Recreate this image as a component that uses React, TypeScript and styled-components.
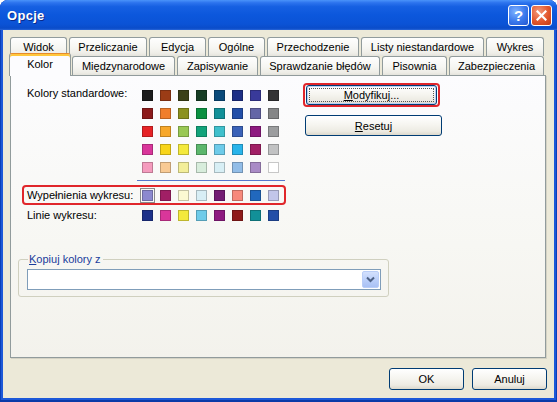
import React from "react";
import styled, { createGlobalStyle } from "styled-components";

const GlobalStyle = createGlobalStyle`
  html, body { margin: 0; padding: 0; background: #ffffff; }
  body {
    font-family: "Liberation Sans", Arial, sans-serif;
    font-size: 11px;
    color: #000;
  }
  * { box-sizing: border-box; }
`;

const STANDARD = [
  ["#1c1c1c", "#9b3c16", "#3b4018", "#163d24", "#0a4a7a", "#1d2f85", "#393a9a", "#333335"],
  ["#8c1b1b", "#f07e2c", "#8c911f", "#0a9040", "#129098", "#234fa8", "#6465a6", "#858687"],
  ["#e62326", "#f7a729", "#99c854", "#12a37a", "#40c0cc", "#3a62b8", "#8e1a80", "#9c9d9f"],
  ["#d9369a", "#f8d51a", "#f4e93c", "#5cb76c", "#6ecbe9", "#29b4ea", "#a11f65", "#c1c2c3"],
  ["#f49bbd", "#f8ca94", "#f3ee99", "#d8eddc", "#d8eff5", "#92bde7", "#a98bc6", "#ffffff"],
];
const FILLS = ["#8c89cf", "#a11f65", "#fbf9d2", "#d8eef5", "#731c73", "#f7897b", "#2168bd", "#c2c6ea"];
const LINES = ["#1d3189", "#d9369a", "#f4e93c", "#6ecbe9", "#8e1a80", "#8e1a1a", "#129098", "#234fa8"];

const BACK_TABS = [
  { label: "Widok", w: 57 },
  { label: "Przeliczanie", w: 78 },
  { label: "Edycja", w: 57 },
  { label: "Ogólne", w: 57 },
  { label: "Przechodzenie", w: 92 },
  { label: "Listy niestandardowe", w: 123 },
  { label: "Wykres", w: 58 },
];
const FRONT_TABS = [
  { label: "Kolor", w: 62, active: true },
  { label: "Międzynarodowe", w: 103 },
  { label: "Zapisywanie", w: 81 },
  { label: "Sprawdzanie błędów", w: 120 },
  { label: "Pisownia", w: 65 },
  { label: "Zabezpieczenia", w: 95 },
];

const Window = styled.div`
  width: 557px;
  height: 402px;
  display: flex;
  flex-direction: column;
  background: #1c58d8;
  border-radius: 8px 8px 0 0;
  overflow: hidden;
  box-shadow: inset 0 -2px 0 #0a3aa8, inset 1px 0 0 #0a3fb8, inset -1px 0 0 #0a3fb8;
`;

const TitleBar = styled.div`
  height: 30px;
  flex: 0 0 30px;
  display: flex;
  align-items: center;
  gap: 2px;
  padding: 0 5px 0 7px;
  background: linear-gradient(180deg, #4a93fa 0%, #2d74ee 9%, #1660e2 22%, #0c57dc 50%, #0b53d6 80%, #0a4cc9 94%, #2a66d8 100%);
`;

const Title = styled.div`
  flex: 1;
  color: #fff;
  font-weight: bold;
  font-size: 13px;
  letter-spacing: 0.3px;
  text-shadow: 1px 1px 0 #0a2a8a;
`;

const CaptionButton = styled.div<{ $close?: boolean }>`
  width: 21px;
  height: 21px;
  border: 1px solid #fff;
  border-radius: 3px;
  display: flex;
  align-items: center;
  justify-content: center;
  color: #fff;
  font-weight: bold;
  font-size: 15px;
  background: ${(p) =>
    p.$close
      ? "radial-gradient(circle at 35% 30%, #f39a7c 0%, #e2572d 55%, #c23b14 100%)"
      : "radial-gradient(circle at 35% 30%, #7fb2ff 0%, #3a78ec 55%, #2456d0 100%)"};
`;

const Body = styled.div`
  flex: 1;
  margin: 0 3px 4px 3px;
  background: #ece9d8;
  padding: 7px 8px 8px 7px;
  display: flex;
  flex-direction: column;
`;

const TabRow = styled.div`
  height: 19px;
  display: flex;
  align-items: flex-start;
  gap: 2px;
`;

const Tab = styled.div<{ $w: number; $active?: boolean }>`
  width: ${(p) => p.$w}px;
  height: ${(p) => (p.$active ? 23 : 19)}px;
  margin: ${(p) => (p.$active ? "-3px -1px 0 -1px" : "0")};
  position: relative;
  z-index: ${(p) => (p.$active ? 2 : 1)};
  display: flex;
  align-items: center;
  justify-content: center;
  padding-bottom: ${(p) => (p.$active ? 2 : 0)}px;
  white-space: nowrap;
  border: 1px solid #919b9c;
  border-bottom: none;
  border-top-color: ${(p) => (p.$active ? "#e68b2c" : "#919b9c")};
  border-radius: 3px 3px 0 0;
  background: ${(p) =>
    p.$active
      ? "#fcfcfe"
      : "linear-gradient(180deg, #fefefe 0%, #f6f6f2 55%, #eeede7 85%, #e4e3dc 100%)"};
  box-shadow: ${(p) => (p.$active ? "inset 0 2px 0 #ffc73c" : "none")};
`;

const Panel = styled.div`
  height: 283px;
  flex: 0 0 283px;
  border: 1px solid #919b9c;
  background: linear-gradient(180deg, #fcfcfe 0%, #f7f7f3 60%, #f3f2ec 100%);
  box-shadow: 1px 1px 0 #d4d2c4;
  padding: 7px 0 0 7px;
  display: flex;
  flex-direction: column;
`;

const TopSection = styled.div`
  display: flex;
  align-items: flex-start;
`;

const ColorArea = styled.div`
  margin-left: 9px;
  padding-top: 7px;
  width: 260px;
  display: flex;
  flex-direction: column;
`;

const Row = styled.div`
  display: flex;
  align-items: center;
`;

const StdRow = styled.div`
  display: flex;
  align-items: flex-start;
`;

const Label = styled.div<{ $shift?: number }>`
  width: 115px;
  flex: 0 0 115px;
  line-height: 13px;
  white-space: nowrap;
  margin-top: ${(p) => p.$shift || 0}px;
`;

const SwatchGrid = styled.div`
  display: grid;
  grid-template-columns: repeat(8, 11px);
  grid-auto-rows: 11px;
  column-gap: 7px;
  row-gap: 7px;
`;

const Swatch = styled.div<{ $color: string; $selected?: boolean }>`
  width: 11px;
  height: 11px;
  background: ${(p) => p.$color};
  border: 1px solid rgba(0, 0, 0, 0.22);
  outline: ${(p) => (p.$selected ? "1px solid #8a8a8a" : "none")};
  outline-offset: 1px;
`;

const Separator = styled.div`
  margin: 7px 0 0 110px;
  width: 148px;
  height: 1px;
  background: #5677cc;
`;

const Highlight = styled.div<{ $pad: string }>`
  border: 2px solid #e0262b;
  border-radius: 4px;
  padding: ${(p) => p.$pad};
`;

const FillRow = styled(Highlight)`
  margin: 4px 0 0 -5px;
  display: flex;
  align-items: center;
  width: 264px;
`;

const LineRow = styled(Row)`
  margin-top: 4px;
`;

const ButtonColumn = styled.div`
  margin-left: 16px;
  display: flex;
  flex-direction: column;
  align-items: flex-start;
`;

const XPButton = styled.button<{ $w: number; $h: number; $focus?: boolean }>`
  width: ${(p) => p.$w}px;
  height: ${(p) => p.$h}px;
  padding: 0;
  font-family: inherit;
  font-size: 11px;
  color: #000;
  border: 1px solid #003c74;
  border-radius: 3px;
  background: linear-gradient(180deg, #ffffff 0%, #f6f5f0 45%, #edebe3 80%, #dcd8cc 100%);
  box-shadow: ${(p) => (p.$focus ? "inset 0 0 0 1px #b9d0f5" : "none")};
  outline: ${(p) => (p.$focus ? "1px dotted #555" : "none")};
  outline-offset: -4px;
  u { text-decoration: underline; }
`;

const ResetButton = styled(XPButton)`
  margin: 8px 0 0 2px;
`;

const GroupBox = styled.fieldset`
  margin: 31px 0 0 0;
  width: 370px;
  border: 1px solid #d0d0bf;
  border-radius: 3px;
  padding: 3px 7px 6px 8px;
`;

const GroupLegend = styled.legend`
  padding: 0 2px 0 1px;
  margin-left: 1px;
  color: #1a3d9c;
  line-height: 13px;
`;

const Combo = styled.div`
  width: 354px;
  height: 21px;
  border: 1px solid #7f9db9;
  background: #fff;
  display: flex;
  justify-content: flex-end;
  align-items: center;
  padding-right: 1px;
`;

const DropButton = styled.div`
  width: 17px;
  height: 17px;
  border: 1px solid #b9cdf7;
  border-radius: 2px;
  background: linear-gradient(180deg, #d3e0fd 0%, #bcd0fa 50%, #a9c1f4 100%);
  display: flex;
  align-items: center;
  justify-content: center;
`;

const BottomBar = styled.div`
  margin-top: 10px;
  display: flex;
  justify-content: flex-end;
  gap: 8px;
  margin-right: -1px;
`;

const Chevron = () => (
  <svg width="9" height="7" viewBox="0 0 9 7">
    <path d="M1 1.5 L4.5 5 L8 1.5" fill="none" stroke="#4d6185" strokeWidth="2" />
  </svg>
);

const CloseGlyph = () => (
  <svg width="11" height="11" viewBox="0 0 11 11">
    <path d="M1.5 1.5 L9.5 9.5 M9.5 1.5 L1.5 9.5" stroke="#fff" strokeWidth="2.2" strokeLinecap="square" />
  </svg>
);

export default function App() {
  return (
    <>
      <GlobalStyle />
      <Window>
        <TitleBar>
          <Title>Opcje</Title>
          <CaptionButton>?</CaptionButton>
          <CaptionButton $close>
            <CloseGlyph />
          </CaptionButton>
        </TitleBar>
        <Body>
          <TabRow>
            {BACK_TABS.map((t) => (
              <Tab key={t.label} $w={t.w}>{t.label}</Tab>
            ))}
          </TabRow>
          <TabRow>
            {FRONT_TABS.map((t) => (
              <Tab key={t.label} $w={t.w} $active={t.active}>{t.label}</Tab>
            ))}
          </TabRow>
          <Panel>
            <TopSection>
              <ColorArea>
                <StdRow>
                  <Label $shift={-3}>Kolory standardowe:</Label>
                  <SwatchGrid>
                    {STANDARD.flat().map((c, i) => (
                      <Swatch key={i} $color={c} />
                    ))}
                  </SwatchGrid>
                </StdRow>
                <Separator />
                <FillRow $pad="2px 5px 1px 3px">
                  <Label>Wypełnienia wykresu:</Label>
                  <SwatchGrid>
                    {FILLS.map((c, i) => (
                      <Swatch key={i} $color={c} $selected={i === 0} />
                    ))}
                  </SwatchGrid>
                </FillRow>
                <LineRow>
                  <Label>Linie wykresu:</Label>
                  <SwatchGrid>
                    {LINES.map((c, i) => (
                      <Swatch key={i} $color={c} />
                    ))}
                  </SwatchGrid>
                </LineRow>
              </ColorArea>
              <ButtonColumn>
                <Highlight $pad="0 1px">
                  <XPButton $w={131} $h={20} $focus>
                    <u>M</u>odyfikuj...
                  </XPButton>
                </Highlight>
                <ResetButton $w={137} $h={21}>
                  <u>R</u>esetuj
                </ResetButton>
              </ButtonColumn>
            </TopSection>
            <GroupBox>
              <GroupLegend>
                <u>K</u>opiuj kolory z
              </GroupLegend>
              <Combo>
                <DropButton>
                  <Chevron />
                </DropButton>
              </Combo>
            </GroupBox>
          </Panel>
          <BottomBar>
            <XPButton $w={75} $h={22}>OK</XPButton>
            <XPButton $w={75} $h={22}>Anuluj</XPButton>
          </BottomBar>
        </Body>
      </Window>
    </>
  );
}
